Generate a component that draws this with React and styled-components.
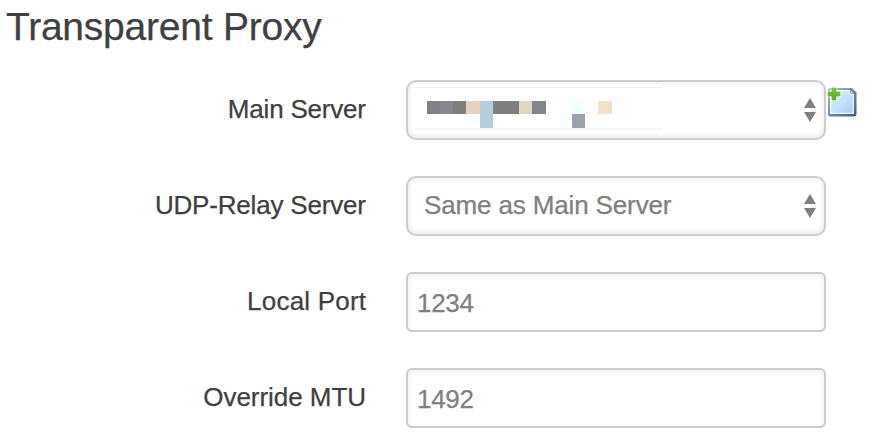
import React from "react";
import styled, { createGlobalStyle } from "styled-components";

const GlobalStyle = createGlobalStyle`
  * { box-sizing: border-box; }
  body {
    margin: 0;
    background: #fff;
    color: #404040;
    font-family: "Liberation Sans", Arial, sans-serif;
    -webkit-text-stroke: 0.25px currentColor;
  }
`;

const Section = styled.section`
  width: 880px;
  height: 440px;
  overflow: hidden;
`;

const Title = styled.h3`
  margin: 0;
  height: 80px;
  padding: 7px 0 0 6px;
  font-size: 39px;
  font-weight: 400;
  line-height: 40px;
  letter-spacing: ${(p) => p.$track}px;
  white-space: nowrap;
`;

const Row = styled.div`
  display: flex;
  height: 60px;
  margin-bottom: 36px;
`;

const Label = styled.label`
  display: flex;
  justify-content: flex-end;
  width: 366px;
  margin-right: 40px;
  padding-top: 14px;
  font-size: 26px;
  line-height: 30px;
  white-space: nowrap;
`;

const LabelText = styled.span`
  letter-spacing: ${(p) => p.$track || 0}px;
  margin-right: ${(p) => -(p.$track || 0)}px;
`;

const Field = styled.div`
  display: flex;
  width: 420px;
  height: 60px;
  border: 2px solid #ccc;
  border-radius: ${(p) => (p.$select ? 10 : 6)}px;
  box-shadow: ${(p) =>
    p.$select
      ? "inset 0 0 6px rgba(0, 0, 0, 0.07), inset 0 -2px 5px rgba(0, 0, 0, 0.05)"
      : "inset 0 2px 6px rgba(0, 0, 0, 0.075)"};
  background: #fff;
`;

const Value = styled.span`
  flex: 1;
  padding: ${(p) => (p.$select ? "12px 0 0 16px" : "14px 0 0 9px")};
  color: #808080;
  font-size: 26px;
  line-height: 30px;
  letter-spacing: ${(p) => p.$track || 0}px;
  white-space: nowrap;
`;

const Arrows = styled.svg`
  display: block;
  width: 12px;
  height: 24px;
  margin: 16px 8px 0 auto;
`;

const Redacted = styled.div`
  display: grid;
  grid-template-columns: 13px 13px 13px 14px 13px 26px 13px 14px 26px 13px 13px 14px;
  grid-template-rows: 13px 14px;
  width: 248px;
  height: 43px;
  margin: 5px 0 0 6px;
  padding: 13px 0 0 13px;
  border-top: 1px solid #eee;
  border-bottom: 2px solid #f7f7f7;
  background: #fff;
`;

const Block = styled.i`
  grid-column: ${(p) => p.$col};
  grid-row: ${(p) => p.$row || "1"};
  background: ${(p) => p.$fill};
`;

const AddButton = styled.button`
  display: block;
  width: 32px;
  height: 32px;
  margin: 6px 0 0;
  padding: 0;
  border: 0;
  background: none;
  svg { display: block; }
`;

const blocks = [
  ["1", "#808085"],
  ["2", "#858791"],
  ["3", "#7f7f7e"],
  ["4", "#e5d0c2"],
  ["5", "#b5cedc", "1 / 3"],
  ["6", "#7f7f7f"],
  ["7", "#e0d7c3"],
  ["8", "#81868a"],
  ["10", "#f0ffff"],
  ["10", "#9ca2ad", "2"],
  ["12", "#f2dfce"],
];

function SelectArrows() {
  return (
    <Arrows viewBox="0 0 12 24" fill="#808080" aria-hidden="true">
      <path d="M6 0 L12 10 H0 Z" />
      <path d="M0 14 H12 L6 24 Z" />
    </Arrows>
  );
}

function AddIcon() {
  return (
    <svg width="32" height="32" viewBox="0 0 32 32" aria-hidden="true">
      <defs>
        <linearGradient id="frame" x1="0" y1="0" x2="1" y2="1">
          <stop offset="0" stopColor="#a9bfdc" />
          <stop offset="0.5" stopColor="#7189ae" />
          <stop offset="1" stopColor="#465a80" />
        </linearGradient>
        <linearGradient id="paper" x1="0" y1="0" x2="1" y2="1">
          <stop offset="0" stopColor="#d9ebff" />
          <stop offset="0.5" stopColor="#c5e2ff" />
          <stop offset="1" stopColor="#a3cdfa" />
        </linearGradient>
        <linearGradient id="plus" x1="0" y1="0" x2="0" y2="1">
          <stop offset="0" stopColor="#86c834" />
          <stop offset="1" stopColor="#5ca51e" />
        </linearGradient>
      </defs>
      <path d="M4 2 H26 L30.5 6.5 V28 Q30.5 30.5 28 30.5 H4 Q2 30.5 2 28.5 V4 Q2 2 4 2Z" fill="url(#frame)" />
      <path d="M4 4 H23.5 Q23.5 8.3 28 8.3 V28 H4Z" fill="#edf6ff" />
      <path d="M5.3 5.3 H22.3 Q22.3 9.6 26.7 9.6 V26.7 H5.3Z" fill="url(#paper)" />
      <path d="M24.4 4 L28 7.6 Q24.4 7.5 24.4 4Z" fill="#c5dbf5" />
      <path d="M4.6 0.5 H11.4 V4.7 H15.4 V11.3 H11.4 V15 H4.6 V11.3 H1.5 V4.7 H4.6Z" fill="#fff" opacity="0.6" />
      <path d="M6 2 H10 V6 H14 V10 H10 V14 H6 V10 H2 V6 H6Z" fill="url(#plus)" stroke="#76b936" strokeWidth="0.7" />
    </svg>
  );
}

export default function App() {
  return (
    <>
      <GlobalStyle />
      <Section>
        <Title $track={-0.23}>Transparent Proxy</Title>
        <Row>
          <Label><LabelText $track={-0.2}>Main Server</LabelText></Label>
          <Field $select>
            <Redacted>
              {blocks.map(([col, fill, row], i) => (
                <Block key={i} $col={col} $fill={fill} $row={row} />
              ))}
            </Redacted>
            <SelectArrows />
          </Field>
          <AddButton type="button" aria-label="Add server"><AddIcon /></AddButton>
        </Row>
        <Row>
          <Label><LabelText $track={-0.18}>UDP-Relay Server</LabelText></Label>
          <Field $select>
            <Value $select $track={-0.14}>Same as Main Server</Value>
            <SelectArrows />
          </Field>
        </Row>
        <Row>
          <Label><LabelText $track={0.2}>Local Port</LabelText></Label>
          <Field><Value $track={-0.3}>1234</Value></Field>
        </Row>
        <Row>
          <Label><LabelText $track={-0.05}>Override MTU</LabelText></Label>
          <Field><Value $track={-0.3}>1492</Value></Field>
        </Row>
      </Section>
    </>
  );
}
